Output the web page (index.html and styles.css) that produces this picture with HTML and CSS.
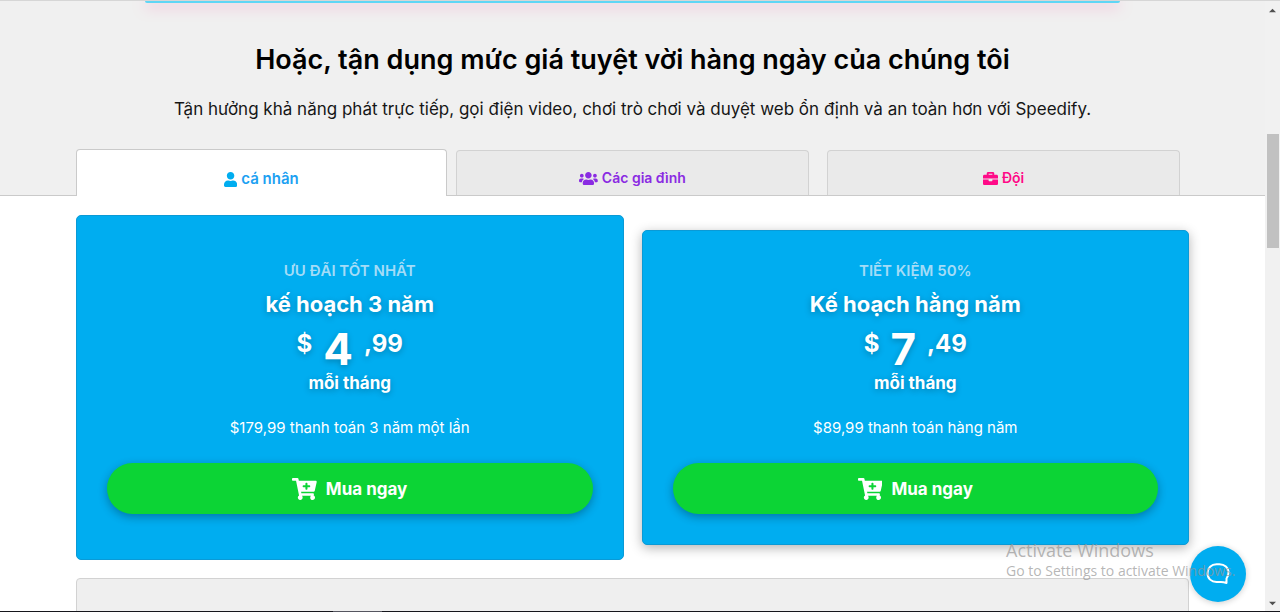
FILE: index.html
```html
<!DOCTYPE html>
<html lang="vi">
<head>
<meta charset="utf-8">
<meta name="viewport" content="width=device-width, initial-scale=1">
<title>Speedify</title>
<link rel="stylesheet" href="styles.css">
</head>
<body>
<div class="screen">
  <div class="viewport">
    <main class="page">
      <header class="intro">
        <div class="promo-edge"></div>
        <h2 class="intro-title">Hoặc, tận dụng mức giá tuyệt vời hàng ngày của chúng tôi</h2>
        <p class="intro-text">Tận hưởng khả năng phát trực tiếp, gọi điện video, chơi trò chơi và duyệt web ổn định và an toàn hơn với Speedify.</p>
        <div class="tabs container" role="tablist">
          <button class="tab tab-active" type="button" role="tab" aria-selected="true">
            <svg class="tab-icon" viewBox="0 0 448 512" aria-hidden="true"><path d="M224 256c70.7 0 128-57.3 128-128S294.7 0 224 0 96 57.3 96 128s57.3 128 128 128zm89.6 32h-16.7c-22.2 10.2-46.9 16-72.9 16s-50.6-5.8-72.9-16h-16.7C60.2 288 0 348.2 0 422.4V464c0 26.5 21.5 48 48 48h352c26.5 0 48-21.5 48-48v-41.6c0-74.2-60.2-134.4-134.4-134.4z"/></svg>
            <span>cá nhân</span>
          </button>
          <button class="tab tab-family" type="button" role="tab" aria-selected="false">
            <svg class="tab-icon" viewBox="0 0 640 512" aria-hidden="true"><path d="M96 224c35.3 0 64-28.700 64-64s-28.700-64-64-64-64 28.700-64 64 28.700 64 64 64zm448 0c35.300 0 64-28.700 64-64s-28.700-64-64-64-64 28.700-64 64 28.700 64 64 64zm32 32h-64c-17.600 0-33.500 7.100-45.100 18.600 40.300 22.100 68.900 62 75.100 109.400h66c17.700 0 32-14.300 32-32v-32c0-35.300-28.700-64-64-64zm-256 0c61.900 0 112-50.100 112-112S381.900 32 320 32 208 82.100 208 144s50.100 112 112 112zm76.800 32h-8.300c-20.800 10-43.900 16-68.500 16s-47.600-6-68.500-16h-8.300C179.600 288 128 339.600 128 403.200V432c0 26.500 21.500 48 48 48h288c26.500 0 48-21.500 48-48v-28.800c0-63.600-51.600-115.200-115.200-115.200zm-223.700-13.400C161.500 263.100 145.600 256 128 256H64c-35.300 0-64 28.700-64 64v32c0 17.700 14.300 32 32 32h65.900c6.300-47.400 34.900-87.300 75.200-109.400z"/></svg>
            <span>Các gia đình</span>
          </button>
          <button class="tab tab-team" type="button" role="tab" aria-selected="false">
            <svg class="tab-icon" viewBox="0 0 512 512" aria-hidden="true"><path d="M320 336c0 8.840-7.160 16-16 16h-96c-8.840 0-16-7.160-16-16v-48H0v144c0 25.600 22.400 48 48 48h416c25.600 0 48-22.400 48-48V288H320v48zm144-208h-80V80c0-25.600-22.400-48-48-48H176c-25.600 0-48 22.400-48 48v48H48c-25.600 0-48 22.400-48 48v80h512v-80c0-25.600-22.400-48-48-48zm-144 0H192V96h128v32z"/></svg>
            <span>Đội</span>
          </button>
        </div>
      </header>

      <section class="plans container">
        <article class="plan plan-best">
          <p class="plan-note">ƯU ĐÃI TỐT NHẤT</p>
          <h3 class="plan-name">kế hoạch 3 năm</h3>
          <p class="price"><span class="price-side">$</span><strong class="price-main">4</strong><span class="price-side">,99</span></p>
          <p class="period">mỗi tháng</p>
          <p class="billing">$179,99 thanh toán 3 năm một lần</p>
          <button class="buy" type="button">
            <svg class="buy-icon" viewBox="0 0 576 512" aria-hidden="true"><path d="M504.717 320H211.572l6.545 32h268.418c15.401 0 26.816 14.301 23.403 29.319l-5.517 24.276C523.112 414.668 536 433.828 536 456c0 31.202-25.519 56.444-56.824 55.994-29.823-.429-54.350-24.631-55.155-54.447-.440-16.287 6.085-31.049 16.803-41.548H231.176C241.553 426.165 248 440.326 248 456c0 31.813-26.528 57.431-58.670 55.938-28.540-1.325-51.751-24.385-53.251-52.917-1.158-22.034 10.436-41.455 28.051-51.586L93.883 64H24C10.745 64 0 53.255 0 40V24C0 10.745 10.745 0 24 0h102.529c11.401 0 21.228 8.021 23.513 19.190L159.208 64H551.990c15.401 0 26.816 14.301 23.403 29.319l-47.273 208C525.637 312.246 515.923 320 504.717 320zM408 168h-48v-40c0-8.837-7.163-16-16-16h-16c-8.837 0-16 7.163-16 16v40h-48c-8.837 0-16 7.163-16 16v16c0 8.837 7.163 16 16 16h48v40c0 8.837 7.163 16 16 16h16c8.837 0 16-7.163 16-16v-40h48c8.837 0 16-7.163 16-16v-16c0-8.837-7.163-16-16-16z"/></svg>
            <span>Mua ngay</span>
          </button>
        </article>
        <article class="plan">
          <p class="plan-note">TIẾT KIỆM 50%</p>
          <h3 class="plan-name">Kế hoạch hằng năm</h3>
          <p class="price"><span class="price-side">$</span><strong class="price-main">7</strong><span class="price-side">,49</span></p>
          <p class="period">mỗi tháng</p>
          <p class="billing">$89,99 thanh toán hàng năm</p>
          <button class="buy" type="button">
            <svg class="buy-icon" viewBox="0 0 576 512" aria-hidden="true"><path d="M504.717 320H211.572l6.545 32h268.418c15.401 0 26.816 14.301 23.403 29.319l-5.517 24.276C523.112 414.668 536 433.828 536 456c0 31.202-25.519 56.444-56.824 55.994-29.823-.429-54.350-24.631-55.155-54.447-.440-16.287 6.085-31.049 16.803-41.548H231.176C241.553 426.165 248 440.326 248 456c0 31.813-26.528 57.431-58.670 55.938-28.540-1.325-51.751-24.385-53.251-52.917-1.158-22.034 10.436-41.455 28.051-51.586L93.883 64H24C10.745 64 0 53.255 0 40V24C0 10.745 10.745 0 24 0h102.529c11.401 0 21.228 8.021 23.513 19.190L159.208 64H551.990c15.401 0 26.816 14.301 23.403 29.319l-47.273 208C525.637 312.246 515.923 320 504.717 320zM408 168h-48v-40c0-8.837-7.163-16-16-16h-16c-8.837 0-16 7.163-16 16v40h-48c-8.837 0-16 7.163-16 16v16c0 8.837 7.163 16 16 16h48v40c0 8.837 7.163 16 16 16h16c8.837 0 16-7.163 16-16v-40h48c8.837 0 16-7.163 16-16v-16c0-8.837-7.163-16-16-16z"/></svg>
            <span>Mua ngay</span>
          </button>
        </article>
      </section>

      <section class="more container"></section>
    </main>
    <div class="scrollbar" aria-hidden="true">
      <svg class="scroll-arrow" viewBox="0 0 8 5"><path d="M0 4.500 4 .5l4 4z"/></svg>
      <div class="scroll-track"><div class="scroll-thumb"></div></div>
      <svg class="scroll-arrow" viewBox="0 0 8 5"><path d="M0 .5h8l-4 4z"/></svg>
    </div>
  </div>
  <div class="taskbar"><div class="taskbar-item"></div></div>

  <button class="chat" type="button" aria-label="Chat">
    <svg class="chat-icon" viewBox="0 0 24 24" aria-hidden="true"><path d="M20.500 21V16.500C22 14.500 22.500 12.500 22.500 10.800 22.500 5.500 18.500 2.200 13.500 2.200h-3C5.500 2.200 1.500 5.800 1.500 11.200S5.500 20 10.500 20h4.500c2 0 3.500 .3 5.500 1z"/></svg>
  </button>
  <div class="watermark">
    <p class="watermark-title">Activate Windows</p>
    <p class="watermark-text">Go to Settings to activate Windows.</p>
  </div>
</div>
</body>
</html>
```
FILE: styles.css
```css
* {
  box-sizing: border-box;
}

body,
h2,
h3,
p {
  margin: 0;
}

body {
  font-family: Inter, "Noto Sans", sans-serif;
  color: #000;
  background: #fff;
}

button {
  font-family: inherit;
  cursor: pointer;
}

.screen {
  position: relative;
  display: flex;
  flex-direction: column;
  height: 100vh;
  overflow: hidden;
}

.viewport {
  display: flex;
  flex: 1;
  min-height: 0;
  border-top: 1px solid #d6d6d6;
}

.page {
  flex: 1;
  min-width: 0;
  overflow: hidden;
}

.container {
  width: 88%;
  margin-left: auto;
  margin-right: auto;
}

.intro {
  background: #f0f0f0;
  border-bottom: 1px solid #cacaca;
  text-align: center;
}

.promo-edge {
  width: 77%;
  height: 2px;
  margin: 0 auto;
  background: #5fd6f5;
  border-radius: 0 0 8px 8px;
  box-shadow: 0 3px 14px rgba(255, 0, 128, 0.5);
}

.intro-title {
  margin-top: 41px;
  font-size: 27px;
  font-weight: 600;
  line-height: 32px;
}

.intro-text {
  margin-top: 21px;
  font-size: 17px;
  line-height: 24px;
  color: #161616;
}

.tabs {
  display: grid;
  grid-template-columns: repeat(3, 1fr);
  align-items: end;
  margin-top: 28px;
}

.tab {
  display: flex;
  align-items: center;
  justify-content: center;
  gap: 4px;
  height: 45px;
  margin: 0 9px;
  padding: 10px 0 0;
  background: #eaeaea;
  border: 1px solid #d2d2d2;
  border-bottom: 0;
  border-radius: 4px 4px 0 0;
  font-size: 14px;
  font-weight: 600;
  line-height: 20px;
}

.tab-active {
  height: 47px;
  margin: 0 0 -1px;
  padding-top: 12px;
  background: #fff;
  border-color: #cacaca;
  color: #1da1f2;
  font-size: 15px;
}

.tab-family {
  color: #8a2be2;
}

.tab-team {
  color: #ff0a88;
}

.tab-icon {
  height: 15px;
  fill: currentColor;
}

.tab-active .tab-icon {
  fill: #00adf0;
}

.plans {
  display: grid;
  grid-template-columns: 1fr 1fr;
  gap: 18px;
  align-items: center;
  margin-top: 19px;
}

.plan {
  display: flex;
  flex-direction: column;
  align-items: center;
  padding: 30px;
  background: #00adf0;
  border: 1px solid #0a9ad6;
  border-radius: 5px;
  box-shadow: 0 3px 12px rgba(0, 0, 0, 0.3);
  color: #fff;
}

.plan-best {
  padding: 45px 30px;
  box-shadow: none;
}

.plan-note {
  font-size: 15px;
  font-weight: 600;
  line-height: 20px;
  color: #a4dcf7;
}

.plan-name {
  margin-top: 8px;
  font-size: 22px;
  font-weight: 700;
  line-height: 30px;
  text-shadow: 0 2px 6px rgba(0, 0, 0, 0.25);
}

.price {
  display: flex;
  align-items: flex-start;
  gap: 11px;
  height: 52px;
  font-weight: 700;
  text-shadow: 0 2px 6px rgba(0, 0, 0, 0.25);
}

.price-side {
  font-size: 24px;
  line-height: 50px;
}

.price-main {
  font-size: 44px;
  font-weight: 700;
  line-height: 60px;
}

.period {
  font-size: 17px;
  font-weight: 700;
  line-height: 24px;
  text-shadow: 0 2px 6px rgba(0, 0, 0, 0.25);
}

.billing {
  margin-top: 21px;
  font-size: 15px;
  line-height: 24px;
}

.buy {
  display: flex;
  align-items: center;
  justify-content: center;
  gap: 9px;
  width: 100%;
  height: 51px;
  margin-top: 23px;
  padding: 0;
  background: #0cd435;
  border: 0;
  border-radius: 26px;
  box-shadow: 0 3px 10px rgba(0, 0, 0, 0.3);
  color: #fff;
  font-size: 17px;
  font-weight: 700;
  line-height: 24px;
}

.buy-icon {
  height: 22px;
  fill: currentColor;
}

.more {
  height: 160px;
  margin-top: 18px;
  background: #efefef;
  border: 1px solid #d2d2d2;
  border-radius: 4px;
}

.scrollbar {
  display: flex;
  flex-direction: column;
  align-items: center;
  width: 15px;
  padding: 7px 0 5px;
  background: #f1f1f1;
}

.scroll-arrow {
  width: 7px;
  height: 5px;
  fill: #505050;
}

.scroll-track {
  flex: 1;
  align-self: stretch;
  padding: 121px 1px 0 2px;
}

.scroll-thumb {
  height: 114px;
  background: #c1c1c1;
}

.taskbar {
  height: 1px;
  padding: 0 26%;
  background: #16161c;
}

.taskbar-item {
  width: 8%;
  height: 1px;
  background: #55555f;
}

.chat {
  position: absolute;
  right: 34px;
  bottom: 10px;
  display: flex;
  align-items: center;
  justify-content: center;
  width: 56px;
  height: 56px;
  padding: 0;
  background: #00adf0;
  border: 0;
  border-radius: 50%;
  box-shadow: 0 1px 6px rgba(0, 0, 0, 0.2);
}

.chat-icon {
  width: 24px;
  height: 24px;
  fill: none;
  stroke: #fff;
  stroke-width: 2;
  stroke-linejoin: round;
}

.watermark {
  position: absolute;
  right: 52px;
  bottom: 32px;
  width: 222px;
  color: rgba(150, 150, 150, 0.7);
  font-family: "Open Sans", sans-serif;
  white-space: nowrap;
  pointer-events: none;
}

.watermark-title {
  font-size: 18px;
  line-height: 24px;
}

.watermark-text {
  font-size: 14px;
  line-height: 18px;
}
```
